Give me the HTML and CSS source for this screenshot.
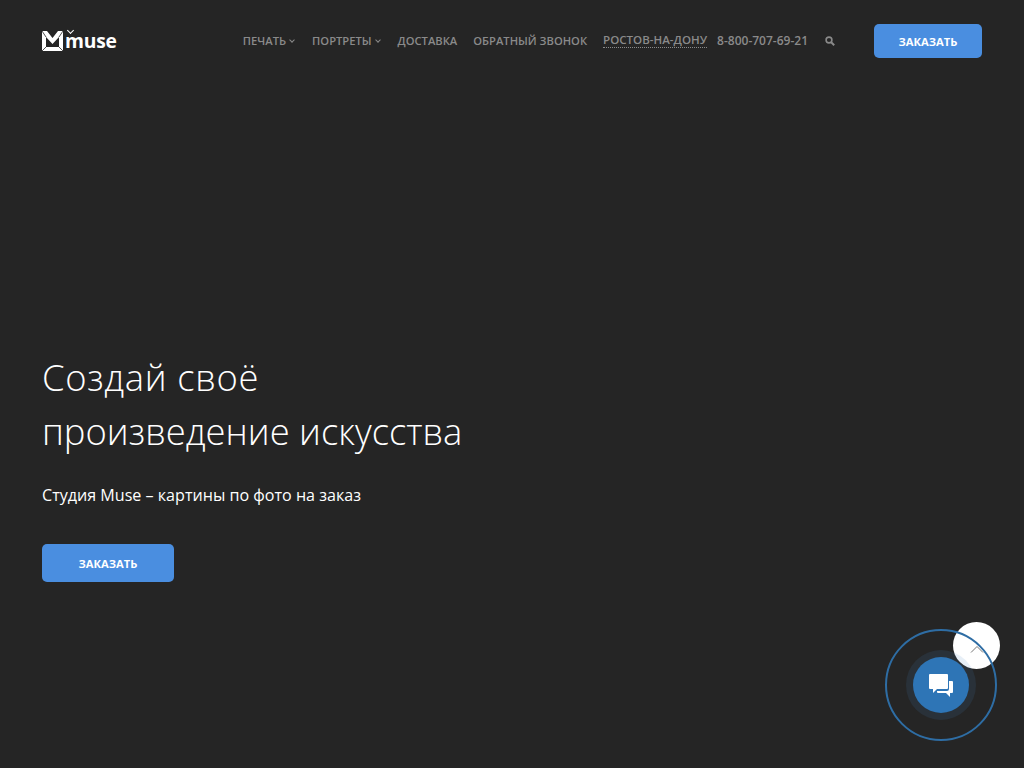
FILE: index.html
```html
<!DOCTYPE html>
<html lang="ru">
<head>
    <meta charset="UTF-8">
    <meta name="viewport" content="width=device-width, initial-scale=1.0">
    <title>Muse</title>
    <link rel="stylesheet" href="styles.css">
</head>
<body>

<header class="header">
    <a class="logo" href="#">
        <svg class="logo-mark" width="21" height="20" viewBox="0 0 21 20">
            <path fill="#fff" fill-rule="evenodd" d="M0 0h5l5.500 7L16 0h5v20H0zM4 6v10h13V6l-6.500 7z"/>
            <path stroke="#252525" stroke-width="0.8" d="M0 0l4 6M21 0l-4 6M0 20l4-4M21 20l-4-4"/>
        </svg>
        <span class="logo-text">muse</span>
        <span class="logo-tick"></span>
    </a>
    <nav class="nav">
        <a class="nav-link" href="#">Печать<span class="caret"></span></a>
        <a class="nav-link" href="#">Портреты<span class="caret"></span></a>
        <a class="nav-link" href="#">Доставка</a>
        <a class="nav-link" href="#">Обратный звонок</a>
    </nav>
    <a class="city" href="#">Ростов-на-Дону</a>
    <a class="phone" href="#">8-800-707-69-21</a>
    <a class="search" href="#">
        <svg width="10" height="10" viewBox="0 0 10 10">
            <circle cx="4" cy="4" r="2.9" fill="none" stroke="#8a8a8a" stroke-width="1.6"/>
            <path d="M6.200 6.200L9.200 9.200" stroke="#8a8a8a" stroke-width="2"/>
        </svg>
    </a>
    <a class="btn btn-header" href="#">Заказать</a>
</header>

<section class="hero">
    <h1><span class="hero-first">Создай своё</span><br>произведение искусства</h1>
    <p class="hero-sub">Студия Muse – картины по фото на заказ</p>
    <a class="btn btn-hero" href="#">Заказать</a>
</section>

<a class="to-top" href="#">
    <svg width="14" height="8" viewBox="0 0 14 8">
        <path d="M1 7.500L7 1.500l6 6" fill="none" stroke="#777" stroke-width="1"/>
    </svg>
</a>

<div class="chat">
    <div class="chat-inner">
        <svg width="24" height="23" viewBox="0 0 24 23">
            <path fill="#fff" d="M1 0h17a1 1 0 0 1 1 1v13a1 1 0 0 1-1 1H8l-4 4v-4H1a1 1 0 0 1-1-1V1a1 1 0 0 1 1-1z"/>
            <path fill="#fff" d="M20 7h3a1 1 0 0 1 1 1v10a1 1 0 0 1-1 1h-2v4l-4-4H9a1 1 0 0 1-1-1v-1h10a2 2 0 0 0 2-2z"/>
        </svg>
    </div>
</div>

</body>
</html>
```

FILE: styles.css
```css
body {
    font-family: "Open Sans", Arial, sans-serif;
    background-color: #252525;
    color: #fff;
    margin: 0;
    height: 768px;
    overflow: hidden;
}
a {
    text-decoration: none;
}
.header {
    display: flex;
    align-items: center;
    height: 34px;
    padding: 24px 42px 0;
}
.logo {
    position: relative;
    display: flex;
    align-items: center;
    color: #fff;
}
.logo-mark {
    margin-right: 2px;
}
.logo-text {
    font-size: 19.3px;
    font-weight: 700;
    line-height: 24px;
    letter-spacing: -0.2px;
}
.logo-tick {
    position: absolute;
    left: 26px;
    top: -1px;
    width: 4px;
    height: 4px;
    border-right: 1.5px solid #fff;
    border-bottom: 1.5px solid #fff;
    transform: rotate(45deg);
}
.nav {
    display: flex;
    gap: 16px;
    margin-left: auto;
    margin-bottom: 2px;
}
.nav-link,
.city,
.phone {
    font-size: 11.2px;
    font-weight: 600;
    color: #8a8a8a;
    text-transform: uppercase;
    white-space: nowrap;
}
.caret {
    display: inline-block;
    width: 3px;
    height: 3px;
    margin: 0 2px 3px 4px;
    border-right: 1.5px solid #8a8a8a;
    border-bottom: 1.5px solid #8a8a8a;
    transform: rotate(45deg);
}
.city {
    font-size: 11.55px;
    margin-left: 16px;
    margin-bottom: 2px;
    border-bottom: 1px dotted #8a8a8a;
}
.phone {
    font-size: 12px;
    margin-left: 10px;
    margin-bottom: 2px;
}
.search {
    display: flex;
    margin-left: 17px;
}
.btn {
    display: flex;
    align-items: center;
    justify-content: center;
    flex-shrink: 0;
    background-color: #4a8ee0;
    color: #fff;
    border-radius: 5px;
    font-size: 11.2px;
    font-weight: 700;
    text-transform: uppercase;
}
.btn-header {
    width: 108px;
    height: 34px;
    margin-left: 39px;
}
.btn-hero {
    width: 132px;
    height: 38px;
}
.hero {
    padding: 292px 42px 0;
}
.hero h1 {
    margin: 0;
    font-size: 36.4px;
    font-weight: 300;
    line-height: 54px;
    color: #fff;
}
.hero-first {
    letter-spacing: 0.65px;
}
.hero-sub {
    margin: 26px 0 38px;
    font-size: 16.1px;
    line-height: 22px;
}
.chat {
    position: fixed;
    left: 885px;
    top: 629px;
    width: 108px;
    height: 108px;
    border: 2px solid #2e6da4;
    border-radius: 50%;
    display: flex;
    align-items: center;
    justify-content: center;
}
.chat-inner {
    width: 56px;
    height: 56px;
    border-radius: 50%;
    background-color: #2e75b6;
    box-shadow: 0 0 0 7px rgba(70, 130, 190, 0.13);
    display: flex;
    align-items: center;
    justify-content: center;
}
.to-top {
    position: fixed;
    left: 953px;
    top: 622px;
    width: 47px;
    height: 47px;
    border-radius: 50%;
    background-color: #fff;
    display: flex;
    align-items: center;
    justify-content: center;
}
.to-top svg {
    margin-top: 6px;
}
```
